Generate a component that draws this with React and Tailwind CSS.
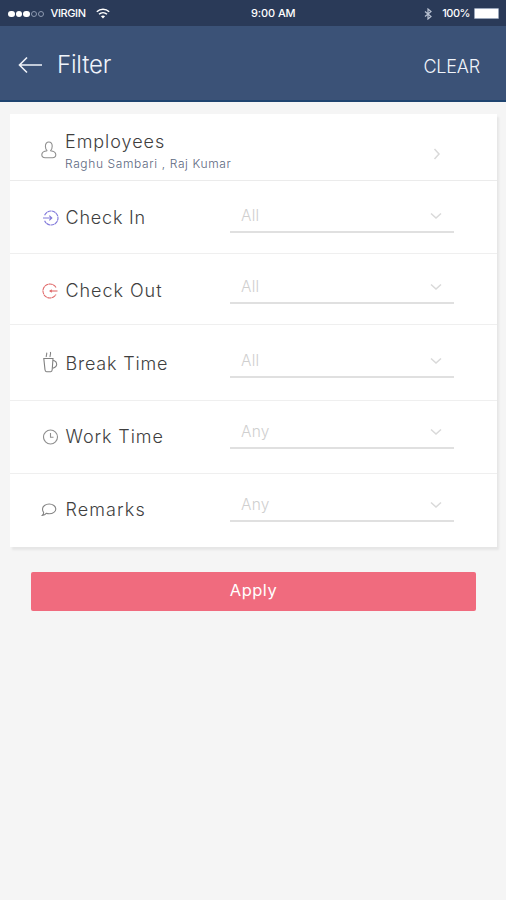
import React from 'react';

const UserIcon = () => (
    <svg width="16" height="18" viewBox="0 0 16 18" fill="none" stroke="#8f8f8f" strokeWidth="1.1">
        <path d="M6.200 9.800C5 8.900 4.400 7.200 4.400 5.200 4.400 2.700 5.800 1 7.800 1s3.400 1.700 3.400 4.200c0 2-.6 3.700-1.800 4.600" />
        <path d="M6.200 9.800c-3 .3-5.400 1.600-5.400 4 0 2 1.400 2.900 3.300 2.900h7.400c1.900 0 3.300-.9 3.300-2.900 0-2.400-2.400-3.700-5.400-4" />
    </svg>
);

const CheckInIcon = () => (
    <svg width="16" height="16" viewBox="0 0 16 16" fill="none" stroke="#8078da" strokeWidth="1.1">
        <path d="M1.600 5.200A7 7 0 1 1 1.600 10.800" strokeDasharray="4 .4" />
        <path d="M0 8h8.500M6.300 5.700 8.800 8l-2.500 2.300" />
    </svg>
);

const CheckOutIcon = () => (
    <svg className="-ml-[1px]" width="16" height="16" viewBox="0 0 16 16" fill="none" stroke="#e06a6a" strokeWidth="1.100">
        <path d="M14 4.500A7 7 0 1 0 14 11.500" strokeDasharray="4 .4" />
        <path d="M8 8h7.500" />
        <path d="M7 8l2.800-1.800v3.600z" fill="#e06a6a" stroke="none" />
    </svg>
);

const CupIcon = () => (
    <svg className="mb-[5px]" width="16" height="22" viewBox="0 0 16 22" fill="none" stroke="#808080" strokeWidth="1.100">
        <path d="M.8 7.500h9.200l-.8 11.300c-.1 1.200-.7 1.900-1.500 1.900H3.500c-.9 0-1.400-.8-1.500-1.900z" />
        <path d="M10 9.500l1.400.2c1.400.6 2.300 2 2.300 3.600 0 1.500-1.300 3.200-3.900 3.900" />
        <path d="M3.400 6c-.8-1.300 1-2.400.2-4.400M7.200 6c-.8-1.300 1-2.600.2-5" />
    </svg>
);

const ClockIcon = () => (
    <svg width="16" height="16" viewBox="0 0 16 16" fill="none" stroke="#8f8f8f" strokeWidth="1.100">
        <circle cx="7.500" cy="8" r="7" />
        <path d="M7.500 4v4.300h3" />
    </svg>
);

const RemarkIcon = () => (
    <svg className="-ml-[2px]" width="16" height="14" viewBox="0 0 16 14" fill="none" stroke="#858585" strokeWidth="1.100">
        <path d="M8.200 1c3.700 0 6.600 2.200 6.600 4.900s-2.900 4.900-6.600 4.900c-1 0-2-.2-2.900-.5-1 1.200-2.400 1.900-4 2.100.9-.9 1.400-1.900 1.300-3C1.900 8.500 1.500 7.200 1.500 5.900 1.500 3.200 4.500 1 8.200 1z" />
    </svg>
);

const Chevron = ({ className }) => (
    <svg className={className} width="12" height="8" viewBox="0 0 12 8" fill="none" stroke="#d9d9d9" strokeWidth="1.500">
        <path d="M1 1.500l5 4.500 5-4.500" />
    </svg>
);

const FILTERS = [
    {
        label: "Check In",
        value: "All",
        icon: CheckInIcon,
        row: "h-[73px] border-b",
        left: "pt-[26px]",
        select: "mt-[18px]",
        text: "tracking-[0.8px]"
    },
    {
        label: "Check Out",
        value: "All",
        icon: CheckOutIcon,
        row: "h-[71px] border-b",
        left: "pt-[26px]",
        select: "mt-[16px]",
        text: "tracking-[0.95px]"
    },
    {
        label: "Break Time",
        value: "All",
        icon: CupIcon,
        row: "h-[76px] border-b",
        left: "pt-[28px]",
        select: "mt-[19px]",
        text: "tracking-[0.8px]"
    },
    {
        label: "Work Time",
        value: "Any",
        icon: ClockIcon,
        row: "h-[73px] border-b",
        left: "pt-[25px]",
        select: "mt-[14px]",
        text: "tracking-[0.9px]"
    },
    {
        label: "Remarks",
        value: "Any",
        icon: RemarkIcon,
        row: "h-[73px]",
        left: "pt-[25px]",
        select: "mt-[14px]",
        text: "tracking-[1.1px]"
    }
];

const StatusBar = () => (
    <div className="flex h-[26px] items-center bg-[#2a3a58] pt-[1px] pl-[8px] pr-[7px] text-[11px] font-medium text-white">
        <div className="flex w-[243px] items-center">
            <div className="flex items-center gap-[1px]">
                <span className="h-[6px] w-[6.500px] rounded-full bg-white" />
                <span className="h-[6px] w-[6.500px] rounded-full bg-white" />
                <span className="h-[6px] w-[6.500px] rounded-full bg-white" />
                <span className="h-[6px] w-[6px] rounded-full border border-[#8d99b0]" />
                <span className="h-[6px] w-[6px] rounded-full border border-[#8d99b0]" />
            </div>
            <span className="ml-[7px] tracking-[-0.4px]">VIRGIN</span>
            <svg className="ml-[10px]" width="14" height="11" viewBox="0 0 14 11" fill="none" stroke="#ffffff" strokeWidth="1.500">
                <path d="M.8 3.800C4.300.4 9.700.4 13.200 3.800M3 6.300c2.300-2.200 5.700-2.200 8 0" />
                <path d="M7 10.500 4.900 8.300c1.200-1.100 3-1.100 4.200 0z" fill="#ffffff" stroke="none" />
            </svg>
        </div>
        <span className="tracking-[-0.1px]">9:00 AM</span>
        <div className="flex flex-1 items-center justify-end">
            <svg width="8" height="12" viewBox="0 0 8 12" fill="none" stroke="#b9c2d2" strokeWidth="1.200">
                <path d="M1 3.500 7 8.500 4 11V1l3 2.500-6 5" />
            </svg>
            <span className="ml-[10px] tracking-[-0.5px]">100%</span>
            <span className="ml-[4px] h-[11px] w-[25px] rounded-[1px] border border-[#9aa6ba] bg-white" />
        </div>
    </div>
);

const App = () => {
    return (
        <div className="min-h-[900px] w-full bg-[#f5f5f5] font-['Inter',sans-serif]">
            <StatusBar />
            <header className="flex h-[76px] items-center justify-between border-b-2 border-[#1f4470] bg-[#3b5277] pt-[3px] pl-[18px] pr-[26px] text-[#f0f4fa]">
                <div className="flex items-center">
                    <svg width="25" height="18" viewBox="0 0 25 18" fill="none" stroke="#f0f4fa" strokeWidth="1.600">
                        <path d="M24 9H1.500M9 1.500 1.500 9 9 16.500" />
                    </svg>
                    <h1 className="ml-[14px] text-[24px] leading-8 font-light tracking-[-0.2px]">Filter</h1>
                </div>
                <button className="pt-[3px] text-[18px] font-light tracking-[-0.2px]">CLEAR</button>
            </header>

            <main className="pt-3">
                <div className="mr-[9px] ml-[10px] bg-white shadow-[2px_3px_2px_#e6e6e6]">
                    <div className="flex h-[67px] border-b border-[#ebebeb] pl-[31px]">
                        <div className="flex w-[24px] pt-[27px]">
                            <UserIcon />
                        </div>
                        <div className="flex-1 pt-[16px]">
                            <div className="text-[18px] leading-6 font-light tracking-[0.95px] text-[#3f3f3f]">Employees</div>
                            <div className="text-[12px] leading-5 font-light tracking-[0.62px] text-[#5d6880]">Raghu Sambari , Raj Kumar</div>
                        </div>
                        <div className="pt-[36px] pr-[54px]">
                            <Chevron className="-rotate-90" />
                        </div>
                    </div>
                    {FILTERS.map(({ label, value, icon: Icon, row, left, select, text }) => (
                        <div key={label} className={`flex border-[#efefef] pl-[33px] ${row}`}>
                            <div className={`flex w-[187px] ${left}`}>
                                <div className="flex h-[22px] w-[22.500px] items-center">
                                    <Icon />
                                </div>
                                <span className={`text-[18px] leading-[22px] font-light text-[#3f3f3f] ${text}`}>{label}</span>
                            </div>
                            <div className={`flex h-[34px] w-[224px] justify-between border-b-2 border-[#e0e0e0] pr-[12px] pl-[11px] ${select}`}>
                                <span className="pt-[5px] text-[15.5px] leading-6 font-light tracking-[0.2px] text-[#cfcfcf]">{value}</span>
                                <Chevron className="mt-[13px]" />
                            </div>
                        </div>
                    ))}
                </div>
                <button className="mt-[25px] ml-[31px] block h-[39px] w-[445px] rounded-[2px] bg-[#f06b7e] pb-[2px] text-[16.5px] tracking-[0.5px] text-white">Apply</button>
            </main>
        </div>
    );
};

export default App;
